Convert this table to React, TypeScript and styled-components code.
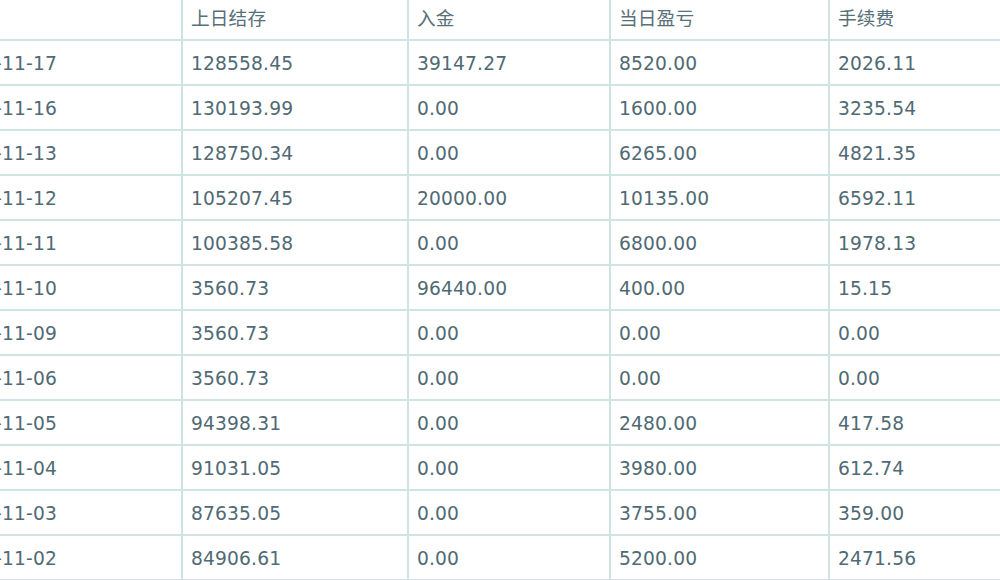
import React from "react";
import styled, { createGlobalStyle } from "styled-components";

const GlobalStyle = createGlobalStyle`
  html, body {
    margin: 0;
    padding: 0;
    background: #ffffff;
  }
  body {
    font-family: Verdana, "DejaVu Sans", "Noto Sans CJK SC", sans-serif;
  }
`;

const Viewport = styled.div`
  width: 1000px;
  height: 580px;
  overflow: hidden;
  background: #ffffff;
`;

const Table = styled.div`
  display: flex;
  flex-direction: column;
  width: max-content;
  margin: -4px 0 0 -61px;
`;

const Row = styled.div`
  display: grid;
  grid-template-columns: 244px 226px 202px 219px 240px;
`;

const Cell = styled.div<{ $head?: boolean }>`
  box-sizing: border-box;
  height: 45px;
  padding: 2px 0 0 8px;
  line-height: 41px;
  border-right: 2px solid #cfe3e2;
  border-bottom: 2px solid #cfe3e2;
  font-family: "DejaVu Sans", Verdana, "Noto Sans CJK SC", sans-serif;
  font-size: 18.67px;
  letter-spacing: 0.15px;
  color: ${(p) => (p.$head ? "#587079" : "#506a74")};
  white-space: nowrap;
  overflow: hidden;
`;

const headers = ["日期", "上日结存", "入金", "当日盈亏", "手续费"];

const rows: string[][] = [
  ["2014-11-17", "128558.45", "39147.27", "8520.00", "2026.11"],
  ["2014-11-16", "130193.99", "0.00", "1600.00", "3235.54"],
  ["2014-11-13", "128750.34", "0.00", "6265.00", "4821.35"],
  ["2014-11-12", "105207.45", "20000.00", "10135.00", "6592.11"],
  ["2014-11-11", "100385.58", "0.00", "6800.00", "1978.13"],
  ["2014-11-10", "3560.73", "96440.00", "400.00", "15.15"],
  ["2014-11-09", "3560.73", "0.00", "0.00", "0.00"],
  ["2014-11-06", "3560.73", "0.00", "0.00", "0.00"],
  ["2014-11-05", "94398.31", "0.00", "2480.00", "417.58"],
  ["2014-11-04", "91031.05", "0.00", "3980.00", "612.74"],
  ["2014-11-03", "87635.05", "0.00", "3755.00", "359.00"],
  ["2014-11-02", "84906.61", "0.00", "5200.00", "2471.56"],
];

export default function App() {
  return (
    <>
      <GlobalStyle />
      <Viewport>
        <Table>
          <Row>
            {headers.map((h) => (
              <Cell key={h} $head>
                {h}
              </Cell>
            ))}
          </Row>
          {rows.map((r) => (
            <Row key={r[0]}>
              {r.map((v, i) => (
                <Cell key={i}>{v}</Cell>
              ))}
            </Row>
          ))}
        </Table>
      </Viewport>
    </>
  );
}
